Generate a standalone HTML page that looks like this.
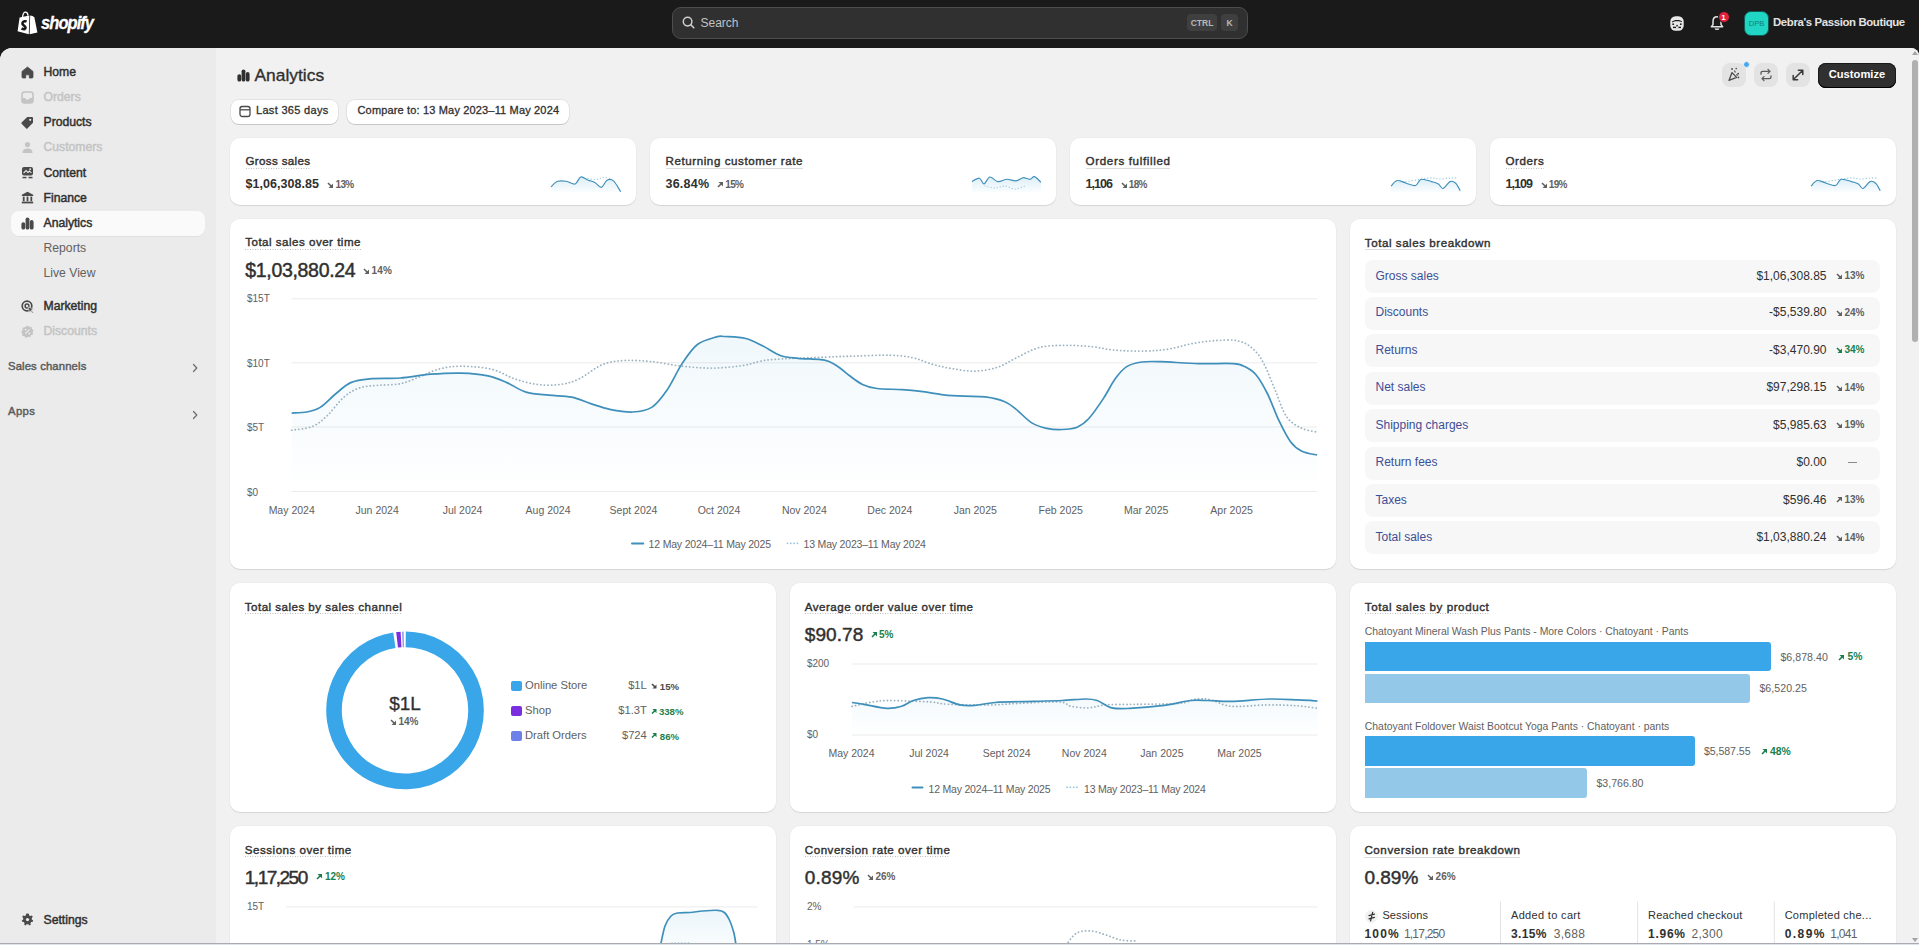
<!DOCTYPE html><html><head><meta charset="utf-8"><style>*{box-sizing:border-box;margin:0;padding:0}
html,body{width:1919px;height:945px;overflow:hidden;background:#1a1a1a;font-family:"Liberation Sans",sans-serif;color:#303030}
.abs{position:absolute}
#top{position:absolute;left:0;top:0;width:1919px;height:48px;background:#1a1a1a}
#frame{position:absolute;left:0;top:48px;width:1919px;height:897px;background:#f1f1f1;border-radius:12px 8px 0 0;overflow:hidden}
#side{position:absolute;left:0;top:48px;width:216px;height:897px;background:#ebebeb;border-radius:12px 0 0 0}
.nav{position:absolute;left:43px;font-size:12px;font-weight:bold;color:#303030;white-space:nowrap;letter-spacing:0}
.nav.dis{color:#b5b5b5}
.nav.sub{font-weight:normal;color:#4a4a4a}
.ico{position:absolute;left:21px;width:12px;height:12px}
.sect{position:absolute;left:8px;font-size:11.5px;font-weight:bold;color:#5c5c5c}
.chev{position:absolute;left:192px;width:8px;height:10px}
.card{position:absolute;background:#fff;border-radius:10px;box-shadow:0 1px 1px rgba(0,0,0,.10),0 0 0 1px rgba(0,0,0,.015)}
.ttl{position:absolute;font-size:12px;font-weight:bold;color:#303030;white-space:nowrap;border-bottom:1px dotted #c9c9c9;line-height:14px;padding-bottom:1px}
.t{position:absolute;white-space:nowrap}
.btn{position:absolute;background:#fff;border-radius:8px;box-shadow:0 1px 0 rgba(0,0,0,.12),0 0 0 1px rgba(0,0,0,.06);font-size:11px;font-weight:bold;color:#303030}
.down,.up{font-size:10px;font-weight:bold;color:#616161;white-space:nowrap}
.green{color:#1f8a55}
</style></head><body>
<div id="top"><svg class="abs" style="left:17px;top:11px" width="22" height="24" viewBox="0 0 22 24">
<path d="M0.6,20.2 L2.6,6.6 L12.4,4.4 L11.8,23.2 Z" fill="#fff"/>
<path d="M13.2,4.4 L15.6,5 L17.4,6.4 L20.4,21.6 L12.6,23.2 Z" fill="#fff"/>
<path d="M5.6,6.2 C5.8,3 7,1.2 8.6,1.2 C10,1.2 10.8,2.6 11,4.6" stroke="#fff" stroke-width="1.3" fill="none"/>
<path d="M9.6,10.6 C9,10.2 8.2,10.1 7.4,10.3 C5.8,10.7 5.2,12.1 5.6,13.2 C6,14.4 8.4,15 8.5,16.6 C8.6,17.8 7.2,18.6 5.4,17.9 L4.6,17.4" stroke="#1a1a1a" stroke-width="2.6" fill="none"/>
</svg><div class="t" style="left:40.8px;top:12.3px;font-size:19px;line-height:21px;font-weight:bold;font-style:italic;color:#fff;letter-spacing:-1.1px;transform:scaleX(0.87);transform-origin:0 0;-webkit-text-stroke:0.3px #fff">shopify</div><div class="abs" style="left:672px;top:7px;width:576px;height:32px;background:#303030;border:1px solid #4d4d4d;border-radius:9px"></div><svg class="abs" style="left:682px;top:16px" width="13" height="13" viewBox="0 0 13 13"><circle cx="5.6" cy="5.6" r="4.3" stroke="#cfcfcf" stroke-width="1.5" fill="none"/><path d="M8.8,8.8 L11.8,11.8" stroke="#cfcfcf" stroke-width="1.6" stroke-linecap="round"/></svg><div class="t" style="left:700.50px;top:17.14px;font-size:12px;line-height:12px;font-weight:normal;color:#c2c2c2;">Search</div><div class="abs" style="left:1187px;top:14px;width:30px;height:17px;background:#3f3f3f;border-radius:4px"></div><div class="t" style="left:1202.00px;top:18.80px;font-size:8.5px;line-height:8.5px;font-weight:bold;color:#b8b8b8;transform:translateX(-50%);">CTRL</div><div class="abs" style="left:1221px;top:14px;width:17px;height:17px;background:#3f3f3f;border-radius:4px"></div><div class="t" style="left:1229.50px;top:18.80px;font-size:8.5px;line-height:8.5px;font-weight:bold;color:#b8b8b8;transform:translateX(-50%);">K</div><svg class="abs" style="left:1670px;top:15.5px" width="14" height="15" viewBox="0 0 14 15">
<rect x="0.3" y="0.3" width="13.4" height="14.4" rx="5.2" fill="#e8e8e8"/>
<path d="M2,5.6 C4,3.6 9.5,3.4 12,5.4 L12,6.2 C9.5,5 5,4.8 2,6.4 Z" fill="#1a1a1a"/>
<circle cx="3.2" cy="8.2" r="0.9" fill="#1a1a1a"/><circle cx="10.8" cy="8.2" r="0.9" fill="#1a1a1a"/><circle cx="7" cy="9.6" r="0.8" fill="#1a1a1a"/>
<path d="M3,11.4 L11,11.4" stroke="#1a1a1a" stroke-width="1.4"/><rect x="6" y="10.8" width="2.4" height="1.2" fill="#e8e8e8"/>
</svg><svg class="abs" style="left:1710px;top:15px" width="16" height="16" viewBox="0 0 16 16">
<path d="M7,1.8 C4.2,1.8 3,4 3,6.4 L3,9.6 L1.4,11.8 L12.6,11.8 L11,9.6 L11,6.4 C11,4 9.8,1.8 7,1.8 Z" stroke="#e3e3e3" stroke-width="1.5" fill="none" stroke-linejoin="round"/>
<path d="M5.2,13.4 C5.6,14.6 8.4,14.6 8.8,13.4" stroke="#e3e3e3" stroke-width="1.5" fill="none"/></svg><div class="abs" style="left:1717.5px;top:11px;width:12px;height:12px;background:#e0233a;border-radius:50%;border:1.5px solid #1a1a1a"></div><div class="t" style="left:1723.50px;top:14.23px;font-size:8px;line-height:8px;font-weight:bold;color:#fff;transform:translateX(-50%);">1</div><div class="abs" style="left:1744px;top:11px;width:25px;height:25px;background:#20d5c4;border-radius:7px;border:1px solid #0e5c56"></div><div class="t" style="left:1756.50px;top:20.15px;font-size:7.5px;line-height:7.5px;font-weight:normal;color:#0d8078;transform:translateX(-50%);">DPB</div><div class="t" style="left:1773.00px;top:16.65px;font-size:11.4px;line-height:11.4px;font-weight:bold;color:#e3e3e3;letter-spacing:-0.370px;margin-right:0.370px;">Debra's Passion Boutique</div></div><div id="frame"></div><div id="side"></div><div class="abs" style="left:11px;top:210.5px;width:194px;height:25.5px;background:#fafafa;border-radius:8px;box-shadow:0 1px 0 rgba(0,0,0,.04)"></div><div class="t" style="left:43.50px;top:65.87px;font-size:12.2px;line-height:12.2px;font-weight:normal;color:#303030;-webkit-text-stroke:0.45px #303030">Home</div><div class="t" style="left:43.50px;top:90.87px;font-size:12.2px;line-height:12.2px;font-weight:normal;color:#c4c4c4;-webkit-text-stroke:0.45px #c4c4c4">Orders</div><div class="t" style="left:43.50px;top:115.87px;font-size:12.2px;line-height:12.2px;font-weight:normal;color:#303030;-webkit-text-stroke:0.45px #303030">Products</div><div class="t" style="left:43.50px;top:140.87px;font-size:12.2px;line-height:12.2px;font-weight:normal;color:#c4c4c4;-webkit-text-stroke:0.45px #c4c4c4">Customers</div><div class="t" style="left:43.50px;top:166.67px;font-size:12.2px;line-height:12.2px;font-weight:normal;color:#303030;-webkit-text-stroke:0.45px #303030">Content</div><div class="t" style="left:43.50px;top:191.67px;font-size:12.2px;line-height:12.2px;font-weight:normal;color:#303030;-webkit-text-stroke:0.45px #303030">Finance</div><div class="t" style="left:43.50px;top:216.67px;font-size:12.2px;line-height:12.2px;font-weight:normal;color:#303030;-webkit-text-stroke:0.45px #303030">Analytics</div><div class="t" style="left:43.50px;top:241.87px;font-size:12.2px;line-height:12.2px;font-weight:normal;color:#616161;">Reports</div><div class="t" style="left:43.50px;top:266.67px;font-size:12.2px;line-height:12.2px;font-weight:normal;color:#616161;">Live View</div><div class="t" style="left:43.50px;top:300.17px;font-size:12.2px;line-height:12.2px;font-weight:normal;color:#303030;-webkit-text-stroke:0.45px #303030">Marketing</div><div class="t" style="left:43.50px;top:324.67px;font-size:12.2px;line-height:12.2px;font-weight:normal;color:#c4c4c4;-webkit-text-stroke:0.45px #c4c4c4">Discounts</div><svg class="abs" style="left:20.5px;top:65.5px" width="13" height="13" viewBox="0 0 13 13"><path d="M6.5,1 L12,5.4 L12,11 Q12,12 11,12 L8.3,12 L8.3,8.8 L4.7,8.8 L4.7,12 L2,12 Q1,12 1,11 L1,5.4 Z" fill="#4a4a4a" stroke="#4a4a4a" stroke-linejoin="round" stroke-width="0.8"/></svg><svg class="abs" style="left:20.5px;top:90.5px" width="13" height="13" viewBox="0 0 13 13"><rect x="1" y="1" width="11" height="11" rx="2.5" fill="none" stroke="#c4c4c4" stroke-width="1.6"/><path d="M1,7 L4.2,7 L5,8.6 L8,8.6 L8.8,7 L12,7 L12,10 Q12,12 10,12 L3,12 Q1,12 1,10 Z" fill="#c4c4c4"/></svg><svg class="abs" style="left:20.5px;top:115.5px" width="13" height="13" viewBox="0 0 13 13"><path d="M6.2,1 L11,1 Q12,1 12,2 L12,6.8 L6.4,12.4 Q5.8,13 5.2,12.4 L0.6,7.8 Q0,7.2 0.6,6.6 Z" fill="#4a4a4a"/><circle cx="9.2" cy="3.8" r="1.1" fill="#ebebeb"/></svg><svg class="abs" style="left:20.5px;top:140.5px" width="13" height="13" viewBox="0 0 13 13"><circle cx="6.5" cy="3.6" r="2.6" fill="#c4c4c4"/><path d="M1.5,12 Q1.5,7.6 6.5,7.6 Q11.5,7.6 11.5,12 Z" fill="#c4c4c4"/></svg><svg class="abs" style="left:20.5px;top:166px" width="13" height="13" viewBox="0 0 13 13"><rect x="1" y="1" width="11" height="8.6" rx="2" fill="#4a4a4a"/><path d="M2.6,7.2 L5,4.6 L7,6.4 L8.6,5 L10.4,7" stroke="#ebebeb" stroke-width="1.1" fill="none"/><circle cx="9.2" cy="3.2" r="0.9" fill="#ebebeb"/><rect x="1.5" y="10.8" width="4" height="1.5" fill="#4a4a4a"/><rect x="7.5" y="10.8" width="4" height="1.5" fill="#4a4a4a"/></svg><svg class="abs" style="left:20.5px;top:191px" width="13" height="13" viewBox="0 0 13 13"><path d="M6.5,0.8 L12.2,3.8 L12.2,5 L0.8,5 L0.8,3.8 Z" fill="#4a4a4a"/><rect x="1.8" y="5.6" width="1.8" height="4.6" fill="#4a4a4a"/><rect x="5.6" y="5.6" width="1.8" height="4.6" fill="#4a4a4a"/><rect x="9.4" y="5.6" width="1.8" height="4.6" fill="#4a4a4a"/><rect x="0.8" y="10.6" width="11.4" height="1.8" fill="#4a4a4a"/></svg><svg class="abs" style="left:20.5px;top:216.5px" width="13" height="13" viewBox="0 0 13 13"><rect x="0.4" y="5.2" width="3.8" height="7.4" rx="1.9" fill="#4a4a4a"/><rect x="4.6" y="0.4" width="3.8" height="12.2" rx="1.9" fill="#4a4a4a"/><rect x="8.8" y="3" width="3.8" height="9.6" rx="1.9" fill="#4a4a4a"/></svg><svg class="abs" style="left:20.5px;top:300px" width="13" height="13" viewBox="0 0 13 13"><circle cx="6" cy="6" r="4.8" stroke="#4a4a4a" stroke-width="1.7" fill="none"/><circle cx="6" cy="6" r="1.9" stroke="#4a4a4a" stroke-width="1.5" fill="none"/><path d="M6.8,6.8 L12.6,9 L10.2,10 L12.4,12.4 L11.6,13 L9.6,10.8 L8.8,12.8 Z" fill="#4a4a4a" stroke="#ebebeb" stroke-width="0.6"/></svg><svg class="abs" style="left:20.5px;top:324.8px" width="13" height="13" viewBox="0 0 13 13"><path d="M6.5,0.5 L8.2,1.9 L10.4,1.7 L10.9,3.9 L12.6,5.3 L11.6,7.2 L12.1,9.4 L10,10.2 L9.1,12.3 L6.9,11.8 L5,12.9 L3.5,11.2 L1.3,11 L1.2,8.8 L0.2,6.8 L1.6,5 L1.7,2.8 L3.9,2.3 Z" fill="#c4c4c4"/><path d="M4.4,8.6 L8.6,4.4" stroke="#ebebeb" stroke-width="1.2"/><circle cx="4.6" cy="4.6" r="0.9" fill="#ebebeb"/><circle cx="8.4" cy="8.4" r="0.9" fill="#ebebeb"/></svg><div class="t" style="left:8.00px;top:360.63px;font-size:11.3px;line-height:11.3px;font-weight:normal;color:#5c5c5c;letter-spacing:0.128px;margin-right:-0.128px;-webkit-text-stroke:0.45px #5c5c5c">Sales channels</div><div class="t" style="left:8.00px;top:406.43px;font-size:11.3px;line-height:11.3px;font-weight:normal;color:#5c5c5c;letter-spacing:0.348px;margin-right:-0.348px;-webkit-text-stroke:0.45px #5c5c5c">Apps</div><svg class="abs" style="left:191px;top:362.5px" width="8" height="10" viewBox="0 0 8 10"><path d="M2.5,1.5 L5.8,5 L2.5,8.5" stroke="#6b6b6b" stroke-width="1.2" fill="none" stroke-linecap="round" stroke-linejoin="round"/></svg><svg class="abs" style="left:191px;top:409.5px" width="8" height="10" viewBox="0 0 8 10"><path d="M2.5,1.5 L5.8,5 L2.5,8.5" stroke="#6b6b6b" stroke-width="1.2" fill="none" stroke-linecap="round" stroke-linejoin="round"/></svg><div class="t" style="left:43.50px;top:913.67px;font-size:12.2px;line-height:12.2px;font-weight:normal;color:#303030;-webkit-text-stroke:0.45px #303030">Settings</div><svg class="abs" style="left:20.5px;top:912.5px" width="13" height="13" viewBox="0 0 13 13"><path d="M6.5,0.6 L7.9,0.8 L8.2,2.4 L9.4,3.1 L10.9,2.5 L11.8,3.7 L10.8,5 L10.8,6.5 L12.2,7.4 L11.8,8.8 L10.2,9.1 L9.4,10.2 L9.8,11.8 L8.5,12.4 L7.4,11.2 L5.6,11.2 L4.5,12.4 L3.2,11.8 L3.6,10.2 L2.8,9.1 L1.2,8.8 L0.8,7.4 L2.2,6.5 L2.2,5 L1.2,3.7 L2.1,2.5 L3.6,3.1 L4.8,2.4 L5.1,0.8 Z" fill="#4a4a4a"/><circle cx="6.5" cy="6.6" r="1.6" fill="#ebebeb"/></svg><svg class="abs" style="left:236.5px;top:68.5px" width="13" height="13" viewBox="0 0 13 13"><rect x="0.4" y="5.2" width="3.8" height="7.4" rx="1.9" fill="#303030"/><rect x="4.6" y="0.4" width="3.8" height="12.2" rx="1.9" fill="#303030"/><rect x="8.8" y="3" width="3.8" height="9.6" rx="1.9" fill="#303030"/></svg><div class="t" style="left:254.50px;top:66.57px;font-size:17.4px;line-height:17.4px;font-weight:normal;color:#303030;-webkit-text-stroke:0.35px #303030">Analytics</div><div class="btn" style="left:231px;top:100px;width:107px;height:23.5px"></div><svg class="abs" style="left:239px;top:104.5px" width="12" height="13" viewBox="0 0 12 13"><rect x="1" y="1.5" width="10" height="10" rx="2.2" stroke="#4a4a4a" stroke-width="1.3" fill="none"/><path d="M1,4.8 L11,4.8" stroke="#4a4a4a" stroke-width="1.3"/></svg><div class="t" style="left:256.00px;top:105.49px;font-size:11px;line-height:11px;font-weight:normal;color:#303030;letter-spacing:0.309px;margin-right:-0.309px;-webkit-text-stroke:0.3px #303030">Last 365 days</div><div class="btn" style="left:347px;top:100px;width:222px;height:23.5px"></div><div class="t" style="left:357.50px;top:105.49px;font-size:11px;line-height:11px;font-weight:normal;color:#303030;letter-spacing:0.160px;margin-right:-0.160px;-webkit-text-stroke:0.3px #303030">Compare to: 13 May 2023–11 May 2024</div><div class="abs" style="left:1721.5px;top:63px;width:24px;height:24px;background:#e3e3e3;border-radius:8px"></div><div class="abs" style="left:1754px;top:63px;width:24px;height:24px;background:#e3e3e3;border-radius:8px"></div><div class="abs" style="left:1786px;top:63px;width:24px;height:24px;background:#e3e3e3;border-radius:8px"></div><div class="abs" style="left:1742.5px;top:60.5px;width:7px;height:7px;background:#4aa8f0;border-radius:50%;border:1px solid #f1f1f1"></div><svg class="abs" style="left:1726px;top:67px" width="16" height="16" viewBox="0 0 16 16">
<path d="M3,13.4 L6,5.6 L10.6,10.4 Z" stroke="#4a4a4a" stroke-width="1.3" fill="none" stroke-linejoin="round"/>
<circle cx="6" cy="2" r="0.9" fill="#4a4a4a"/><circle cx="10.2" cy="1.6" r="0.8" fill="#4a4a4a"/><circle cx="12.2" cy="6.6" r="0.9" fill="#4a4a4a"/><circle cx="12.4" cy="10.4" r="0.9" fill="#4a4a4a"/>
<path d="M8.4,3.6 L9.4,5.4 M10.2,7.6 L12.2,8.2" stroke="#4a4a4a" stroke-width="1.1"/></svg><svg class="abs" style="left:1759px;top:68px" width="14" height="14" viewBox="0 0 14 14">
<path d="M2,6.2 L2,5 Q2,3.4 3.6,3.4 L11,3.4 M9,1.4 L11,3.4 L9,5.4" stroke="#5c5c5c" stroke-width="1.3" fill="none" stroke-linecap="round" stroke-linejoin="round"/>
<path d="M12,7.8 L12,9 Q12,10.6 10.4,10.6 L3,10.6 M5,8.6 L3,10.6 L5,12.6" stroke="#5c5c5c" stroke-width="1.3" fill="none" stroke-linecap="round" stroke-linejoin="round"/></svg><svg class="abs" style="left:1791px;top:68px" width="14" height="14" viewBox="0 0 14 14">
<path d="M2.2,11.8 L11.8,2.2 M7.4,2.2 L11.8,2.2 L11.8,6.6 M2.2,7.4 L2.2,11.8 L6.6,11.8" stroke="#3a3a3a" stroke-width="1.5" fill="none" stroke-linecap="round" stroke-linejoin="round"/></svg><div class="abs" style="left:1818px;top:63px;width:78px;height:24.5px;background:#303030;border-radius:8px;box-shadow:inset 0 -1px 0 #000,inset 0 0 0 1px #1a1a1a"></div><div class="t" style="left:1857.00px;top:68.52px;font-size:11.2px;line-height:11.2px;font-weight:bold;color:#fff;transform:translateX(-50%);">Customize</div><div class="card" style="left:230px;top:138px;width:406px;height:67px"></div><div class="t" style="left:245.50px;top:155.43px;font-size:11.6px;line-height:11.6px;font-weight:normal;color:#303030;letter-spacing:0.336px;margin-right:-0.336px;-webkit-text-stroke:0.4px #303030">Gross sales</div><div class="abs" style="left:245.5px;top:167.5px;width:64.6px;height:1px;background-image:linear-gradient(90deg,#b5b5b5 1px,transparent 1px);background-size:2.5px 1px"></div><div class="card" style="left:650px;top:138px;width:406px;height:67px"></div><div class="t" style="left:665.50px;top:155.43px;font-size:11.6px;line-height:11.6px;font-weight:normal;color:#303030;letter-spacing:0.571px;margin-right:-0.571px;-webkit-text-stroke:0.4px #303030">Returning customer rate</div><div class="abs" style="left:665.5px;top:167.5px;width:137px;height:1px;background:#dcdcdc"></div><div class="card" style="left:1070px;top:138px;width:406px;height:67px"></div><div class="t" style="left:1085.50px;top:155.43px;font-size:11.6px;line-height:11.6px;font-weight:normal;color:#303030;letter-spacing:0.654px;margin-right:-0.654px;-webkit-text-stroke:0.4px #303030">Orders fulfilled</div><div class="abs" style="left:1085.5px;top:167.5px;width:84.6px;height:1px;background:#dcdcdc"></div><div class="card" style="left:1490px;top:138px;width:406px;height:67px"></div><div class="t" style="left:1505.50px;top:155.43px;font-size:11.6px;line-height:11.6px;font-weight:normal;color:#303030;letter-spacing:0.570px;margin-right:-0.570px;-webkit-text-stroke:0.4px #303030">Orders</div><div class="abs" style="left:1505.5px;top:167.5px;width:38.3px;height:1px;background-image:linear-gradient(90deg,#b5b5b5 1px,transparent 1px);background-size:2.5px 1px"></div><div class="t" style="left:245.50px;top:177.92px;font-size:12.5px;line-height:12.5px;font-weight:bold;color:#303030;letter-spacing:0.038px;margin-right:-0.038px;">$1,06,308.85</div><svg class="abs" style="left:327.3px;top:181.8px" width="6" height="6" viewBox="0 0 6 6"><path d="M1,1 L4.8,4.8" stroke="#616161" stroke-width="1.6" fill="none"/><path d="M6,1.5 L6,6 L1.5,6 Z" fill="#616161"/></svg><div class="t" style="left:335.60px;top:179.84px;font-size:10px;line-height:10px;font-weight:bold;color:#616161;letter-spacing:-0.707px;margin-right:0.707px;">13%</div><div class="t" style="left:665.50px;top:177.92px;font-size:12.5px;line-height:12.5px;font-weight:bold;color:#303030;letter-spacing:0.221px;margin-right:-0.221px;">36.84%</div><svg class="abs" style="left:717px;top:181.8px" width="6" height="6" viewBox="0 0 6 6"><path d="M1,5 L4.8,1.2" stroke="#616161" stroke-width="1.6" fill="none"/><path d="M1.5,0 L6,0 L6,4.5 Z" fill="#616161"/></svg><div class="t" style="left:725.30px;top:179.84px;font-size:10px;line-height:10px;font-weight:bold;color:#616161;letter-spacing:-0.707px;margin-right:0.707px;">15%</div><div class="t" style="left:1085.50px;top:177.92px;font-size:12.5px;line-height:12.5px;font-weight:bold;color:#303030;letter-spacing:-0.945px;margin-right:0.945px;">1,106</div><svg class="abs" style="left:1120.5px;top:181.8px" width="6" height="6" viewBox="0 0 6 6"><path d="M1,1 L4.8,4.8" stroke="#616161" stroke-width="1.6" fill="none"/><path d="M6,1.5 L6,6 L1.5,6 Z" fill="#616161"/></svg><div class="t" style="left:1128.80px;top:179.84px;font-size:10px;line-height:10px;font-weight:bold;color:#616161;letter-spacing:-0.707px;margin-right:0.707px;">18%</div><div class="t" style="left:1505.50px;top:177.92px;font-size:12.5px;line-height:12.5px;font-weight:bold;color:#303030;letter-spacing:-0.945px;margin-right:0.945px;">1,109</div><svg class="abs" style="left:1540.5px;top:181.8px" width="6" height="6" viewBox="0 0 6 6"><path d="M1,1 L4.8,4.8" stroke="#616161" stroke-width="1.6" fill="none"/><path d="M6,1.5 L6,6 L1.5,6 Z" fill="#616161"/></svg><div class="t" style="left:1548.80px;top:179.84px;font-size:10px;line-height:10px;font-weight:bold;color:#616161;letter-spacing:-0.707px;margin-right:0.707px;">19%</div><div class="card" style="left:230px;top:219px;width:1106px;height:350px"></div><div class="card" style="left:1350px;top:219px;width:546px;height:350px"></div><div class="card" style="left:230px;top:583px;width:546px;height:229px"></div><div class="card" style="left:790px;top:583px;width:546px;height:229px"></div><div class="card" style="left:1350px;top:583px;width:546px;height:229px"></div><div class="card" style="left:230px;top:826px;width:546px;height:200px"></div><div class="card" style="left:790px;top:826px;width:546px;height:200px"></div><div class="card" style="left:1350px;top:826px;width:546px;height:200px"></div><div class="t" style="left:1364.80px;top:236.78px;font-size:11.6px;line-height:11.6px;font-weight:normal;color:#303030;letter-spacing:0.546px;margin-right:-0.546px;-webkit-text-stroke:0.4px #303030">Total sales breakdown</div><div class="abs" style="left:1364.8px;top:248.75px;width:125.7px;height:1px;background:#dcdcdc"></div><div class="abs" style="left:1365px;top:260px;width:515px;height:33px;background:#f7f7f7;border-radius:8px"></div><div class="t" style="left:1375.50px;top:269.64px;font-size:12px;line-height:12px;font-weight:normal;color:#3c4f96;">Gross sales</div><div class="t" style="right:92.50px;top:269.64px;font-size:12px;line-height:12px;font-weight:normal;color:#303030;">$1,06,308.85</div><svg class="abs" style="left:1836.4px;top:273.3px" width="6" height="6" viewBox="0 0 6 6"><path d="M1,1 L4.8,4.8" stroke="#616161" stroke-width="1.6" fill="none"/><path d="M6,1.5 L6,6 L1.5,6 Z" fill="#616161"/></svg><div class="t" style="left:1844.50px;top:271.34px;font-size:10px;line-height:10px;font-weight:bold;color:#616161;">13%</div><div class="abs" style="left:1365px;top:296.5px;width:515px;height:33px;background:#f7f7f7;border-radius:8px"></div><div class="t" style="left:1375.50px;top:306.14px;font-size:12px;line-height:12px;font-weight:normal;color:#3c4f96;">Discounts</div><div class="t" style="right:92.50px;top:306.14px;font-size:12px;line-height:12px;font-weight:normal;color:#303030;">-$5,539.80</div><svg class="abs" style="left:1836.4px;top:309.8px" width="6" height="6" viewBox="0 0 6 6"><path d="M1,1 L4.8,4.8" stroke="#616161" stroke-width="1.6" fill="none"/><path d="M6,1.5 L6,6 L1.5,6 Z" fill="#616161"/></svg><div class="t" style="left:1844.50px;top:307.84px;font-size:10px;line-height:10px;font-weight:bold;color:#616161;">24%</div><div class="abs" style="left:1365px;top:334px;width:515px;height:33px;background:#f7f7f7;border-radius:8px"></div><div class="t" style="left:1375.50px;top:343.64px;font-size:12px;line-height:12px;font-weight:normal;color:#3c4f96;">Returns</div><div class="t" style="right:92.50px;top:343.64px;font-size:12px;line-height:12px;font-weight:normal;color:#303030;">-$3,470.90</div><svg class="abs" style="left:1836.4px;top:347.3px" width="6" height="6" viewBox="0 0 6 6"><path d="M1,1 L4.8,4.8" stroke="#1b7f4d" stroke-width="1.6" fill="none"/><path d="M6,1.5 L6,6 L1.5,6 Z" fill="#1b7f4d"/></svg><div class="t" style="left:1844.50px;top:345.34px;font-size:10px;line-height:10px;font-weight:bold;color:#1b7f4d;">34%</div><div class="abs" style="left:1365px;top:371.5px;width:515px;height:33px;background:#f7f7f7;border-radius:8px"></div><div class="t" style="left:1375.50px;top:381.14px;font-size:12px;line-height:12px;font-weight:normal;color:#3c4f96;">Net sales</div><div class="t" style="right:92.50px;top:381.14px;font-size:12px;line-height:12px;font-weight:normal;color:#303030;">$97,298.15</div><svg class="abs" style="left:1836.4px;top:384.8px" width="6" height="6" viewBox="0 0 6 6"><path d="M1,1 L4.8,4.8" stroke="#616161" stroke-width="1.6" fill="none"/><path d="M6,1.5 L6,6 L1.5,6 Z" fill="#616161"/></svg><div class="t" style="left:1844.50px;top:382.84px;font-size:10px;line-height:10px;font-weight:bold;color:#616161;">14%</div><div class="abs" style="left:1365px;top:409px;width:515px;height:33px;background:#f7f7f7;border-radius:8px"></div><div class="t" style="left:1375.50px;top:418.64px;font-size:12px;line-height:12px;font-weight:normal;color:#3c4f96;">Shipping charges</div><div class="t" style="right:92.50px;top:418.64px;font-size:12px;line-height:12px;font-weight:normal;color:#303030;">$5,985.63</div><svg class="abs" style="left:1836.4px;top:422.3px" width="6" height="6" viewBox="0 0 6 6"><path d="M1,1 L4.8,4.8" stroke="#616161" stroke-width="1.6" fill="none"/><path d="M6,1.5 L6,6 L1.5,6 Z" fill="#616161"/></svg><div class="t" style="left:1844.50px;top:420.34px;font-size:10px;line-height:10px;font-weight:bold;color:#616161;">19%</div><div class="abs" style="left:1365px;top:446.5px;width:515px;height:33px;background:#f7f7f7;border-radius:8px"></div><div class="t" style="left:1375.50px;top:456.14px;font-size:12px;line-height:12px;font-weight:normal;color:#3c4f96;">Return fees</div><div class="t" style="right:92.50px;top:456.14px;font-size:12px;line-height:12px;font-weight:normal;color:#303030;">$0.00</div><div class="abs" style="left:1848px;top:461.8px;width:9px;height:1.2px;background:#8a8a8a"></div><div class="abs" style="left:1365px;top:484px;width:515px;height:33px;background:#f7f7f7;border-radius:8px"></div><div class="t" style="left:1375.50px;top:493.64px;font-size:12px;line-height:12px;font-weight:normal;color:#3c4f96;">Taxes</div><div class="t" style="right:92.50px;top:493.64px;font-size:12px;line-height:12px;font-weight:normal;color:#303030;">$596.46</div><svg class="abs" style="left:1836.4px;top:497.3px" width="6" height="6" viewBox="0 0 6 6"><path d="M1,5 L4.8,1.2" stroke="#616161" stroke-width="1.6" fill="none"/><path d="M1.5,0 L6,0 L6,4.5 Z" fill="#616161"/></svg><div class="t" style="left:1844.50px;top:495.34px;font-size:10px;line-height:10px;font-weight:bold;color:#616161;">13%</div><div class="abs" style="left:1365px;top:521.3px;width:515px;height:33px;background:#f7f7f7;border-radius:8px"></div><div class="t" style="left:1375.50px;top:530.94px;font-size:12px;line-height:12px;font-weight:normal;color:#3c4f96;">Total sales</div><div class="t" style="right:92.50px;top:530.94px;font-size:12px;line-height:12px;font-weight:normal;color:#303030;">$1,03,880.24</div><svg class="abs" style="left:1836.4px;top:534.5999999999999px" width="6" height="6" viewBox="0 0 6 6"><path d="M1,1 L4.8,4.8" stroke="#616161" stroke-width="1.6" fill="none"/><path d="M6,1.5 L6,6 L1.5,6 Z" fill="#616161"/></svg><div class="t" style="left:1844.50px;top:532.63px;font-size:10px;line-height:10px;font-weight:bold;color:#616161;">14%</div><div class="t" style="left:245.20px;top:236.18px;font-size:11.6px;line-height:11.6px;font-weight:normal;color:#303030;letter-spacing:0.483px;margin-right:-0.483px;-webkit-text-stroke:0.4px #303030">Total sales over time</div><div class="abs" style="left:245.2px;top:248.75px;width:115.4px;height:1px;background-image:linear-gradient(90deg,#b5b5b5 1px,transparent 1px);background-size:2.5px 1px"></div><div class="t" style="left:245.20px;top:260.59px;font-size:19.5px;line-height:19.5px;font-weight:normal;color:#303030;letter-spacing:-0.305px;margin-right:0.305px;-webkit-text-stroke:0.45px #303030">$1,03,880.24</div><svg class="abs" style="left:363.3px;top:267.5px" width="6" height="6" viewBox="0 0 6 6"><path d="M1,1 L4.8,4.8" stroke="#616161" stroke-width="1.6" fill="none"/><path d="M6,1.5 L6,6 L1.5,6 Z" fill="#616161"/></svg><div class="t" style="left:371.60px;top:265.54px;font-size:10px;line-height:10px;font-weight:bold;color:#616161;letter-spacing:0.093px;margin-right:-0.093px;">14%</div><div class="t" style="left:247.00px;top:294.44px;font-size:10px;line-height:10px;font-weight:normal;color:#616161;">$15T</div><div class="t" style="left:247.00px;top:358.54px;font-size:10px;line-height:10px;font-weight:normal;color:#616161;">$10T</div><div class="t" style="left:247.00px;top:423.14px;font-size:10px;line-height:10px;font-weight:normal;color:#616161;">$5T</div><div class="t" style="left:247.00px;top:487.54px;font-size:10px;line-height:10px;font-weight:normal;color:#616161;">$0</div><div class="t" style="left:291.70px;top:505.11px;font-size:10.5px;line-height:10.5px;font-weight:normal;color:#616161;transform:translateX(-50%);">May 2024</div><div class="t" style="left:377.15px;top:505.11px;font-size:10.5px;line-height:10.5px;font-weight:normal;color:#616161;transform:translateX(-50%);">Jun 2024</div><div class="t" style="left:462.60px;top:505.11px;font-size:10.5px;line-height:10.5px;font-weight:normal;color:#616161;transform:translateX(-50%);">Jul 2024</div><div class="t" style="left:548.05px;top:505.11px;font-size:10.5px;line-height:10.5px;font-weight:normal;color:#616161;transform:translateX(-50%);">Aug 2024</div><div class="t" style="left:633.50px;top:505.11px;font-size:10.5px;line-height:10.5px;font-weight:normal;color:#616161;transform:translateX(-50%);">Sept 2024</div><div class="t" style="left:718.95px;top:505.11px;font-size:10.5px;line-height:10.5px;font-weight:normal;color:#616161;transform:translateX(-50%);">Oct 2024</div><div class="t" style="left:804.40px;top:505.11px;font-size:10.5px;line-height:10.5px;font-weight:normal;color:#616161;transform:translateX(-50%);">Nov 2024</div><div class="t" style="left:889.85px;top:505.11px;font-size:10.5px;line-height:10.5px;font-weight:normal;color:#616161;transform:translateX(-50%);">Dec 2024</div><div class="t" style="left:975.30px;top:505.11px;font-size:10.5px;line-height:10.5px;font-weight:normal;color:#616161;transform:translateX(-50%);">Jan 2025</div><div class="t" style="left:1060.75px;top:505.11px;font-size:10.5px;line-height:10.5px;font-weight:normal;color:#616161;transform:translateX(-50%);">Feb 2025</div><div class="t" style="left:1146.20px;top:505.11px;font-size:10.5px;line-height:10.5px;font-weight:normal;color:#616161;transform:translateX(-50%);">Mar 2025</div><div class="t" style="left:1231.65px;top:505.11px;font-size:10.5px;line-height:10.5px;font-weight:normal;color:#616161;transform:translateX(-50%);">Apr 2025</div><svg class="abs" style="left:0;top:0" width="1919" height="945" viewBox="0 0 1919 945"><defs><linearGradient id="g1" x1="0" y1="0" x2="0" y2="1"><stop offset="0" stop-color="#3aa0d0" stop-opacity="0.075"/><stop offset="1" stop-color="#3aa0d0" stop-opacity="0"/></linearGradient></defs><path d="M291.7,298.8 L1317,298.8" stroke="#ebebeb" stroke-width="1"/><path d="M291.7,362.8 L1317,362.8" stroke="#ebebeb" stroke-width="1"/><path d="M291.7,427 L1317,427" stroke="#ebebeb" stroke-width="1"/><path d="M291.7,491.5 L1317,491.5" stroke="#ebebeb" stroke-width="1"/><path d="M291.7,413.1 C294.2,412.9 302.1,412.9 306.9,412.0 C311.6,411.1 315.4,410.4 320.2,407.4 C325.0,404.4 330.4,398.1 335.5,394.0 C340.6,389.9 345.0,385.1 350.7,382.6 C356.4,380.1 361.6,379.6 369.8,378.8 C378.1,378.0 390.1,378.8 400.2,378.0 C410.3,377.2 420.5,375.0 430.7,374.2 C440.9,373.4 451.7,372.8 461.2,373.1 C470.7,373.4 480.3,374.2 487.9,375.8 C495.5,377.4 500.5,379.9 506.9,382.6 C513.2,385.3 519.0,390.0 526.0,392.1 C533.0,394.2 541.2,394.4 548.8,395.2 C556.4,396.0 564.7,395.7 571.7,397.1 C578.7,398.5 584.4,401.6 590.7,403.6 C597.1,405.6 602.8,407.9 609.8,409.3 C616.8,410.7 625.6,412.3 632.6,412.0 C639.6,411.7 646.0,411.0 651.7,407.4 C657.4,403.8 661.8,397.5 666.9,390.2 C672.0,382.9 677.0,371.2 682.1,363.6 C687.2,356.0 691.7,348.9 697.4,344.5 C703.1,340.1 711.8,338.2 716.4,336.9 C721.0,335.6 720.1,336.2 725.0,336.5 C729.9,336.8 739.5,336.9 745.8,338.5 C752.0,340.1 756.6,342.9 762.5,345.8 C768.4,348.7 775.1,353.7 781.0,355.8 C786.9,357.9 791.7,357.7 798.0,358.3 C804.3,358.9 813.6,358.9 818.8,359.4 C824.0,359.9 825.5,360.1 829.0,361.5 C832.5,362.9 836.1,365.3 839.6,367.7 C843.1,370.1 846.2,373.2 850.0,376.0 C853.8,378.8 858.0,382.3 862.5,384.4 C867.0,386.5 870.4,387.6 877.0,388.5 C883.6,389.4 894.3,389.1 902.0,389.6 C909.7,390.1 916.0,390.8 923.0,391.7 C930.0,392.6 936.9,394.1 943.8,394.8 C950.7,395.6 957.7,395.9 964.6,396.2 C971.5,396.5 978.7,396.0 985.4,396.9 C992.1,397.8 999.7,399.6 1004.8,401.7 C1009.9,403.8 1011.8,405.8 1016.2,409.3 C1020.6,412.8 1026.3,419.4 1031.4,422.6 C1036.5,425.8 1041.6,427.2 1046.7,428.3 C1051.8,429.4 1056.8,429.7 1061.9,429.5 C1067.0,429.3 1072.6,429.0 1077.1,427.2 C1081.5,425.4 1084.1,423.7 1088.6,418.8 C1093.0,413.9 1099.4,404.6 1103.8,397.9 C1108.2,391.2 1111.4,384.0 1115.2,378.8 C1119.0,373.6 1122.2,369.4 1126.7,366.6 C1131.2,363.8 1136.2,362.8 1141.9,362.0 C1147.6,361.2 1151.5,361.4 1161.0,361.7 C1170.5,362.0 1187.0,363.3 1199.0,363.6 C1211.0,363.9 1225.7,363.1 1233.3,363.6 C1240.9,364.1 1241.0,364.7 1244.8,366.6 C1248.6,368.5 1252.4,370.4 1256.2,375.0 C1260.0,379.6 1263.8,386.4 1267.6,394.0 C1271.4,401.6 1275.2,412.8 1279.0,420.7 C1282.8,428.6 1286.7,436.6 1290.5,441.7 C1294.3,446.8 1297.5,449.0 1301.9,451.2 C1306.3,453.4 1314.6,454.4 1317.1,455.0 L1317,491.5 L291.7,491.5 Z" fill="url(#g1)"/><path d="M291.7,430.2 C295.2,429.6 306.6,428.9 312.6,426.4 C318.6,423.9 322.8,419.8 327.9,415.0 C333.0,410.2 338.0,402.3 343.1,397.9 C348.2,393.4 352.6,390.4 358.3,388.3 C364.0,386.2 370.4,386.1 377.4,385.3 C384.4,384.6 393.2,385.2 400.2,383.8 C407.2,382.4 412.9,379.3 419.3,376.9 C425.7,374.5 431.3,371.1 438.3,369.3 C445.3,367.5 452.3,366.2 461.2,366.2 C470.1,366.2 482.8,367.2 491.7,369.3 C500.6,371.4 506.9,376.3 514.5,378.8 C522.1,381.3 529.8,383.6 537.4,384.5 C545.0,385.4 553.2,385.4 560.2,384.5 C567.2,383.6 572.3,382.1 579.3,378.8 C586.3,375.5 594.5,367.8 602.1,364.7 C609.7,361.6 616.7,361.0 625.0,360.5 C633.3,360.0 642.2,360.8 651.7,361.7 C661.2,362.6 672.0,365.1 682.1,366.2 C692.2,367.3 702.4,368.2 712.6,368.1 C722.8,368.0 733.6,366.9 743.1,365.5 C752.6,364.1 756.0,361.2 769.8,359.8 C783.6,358.4 811.3,357.7 825.7,357.1 C840.1,356.5 845.4,356.3 856.2,356.0 C867.0,355.7 881.0,354.9 890.5,355.2 C900.0,355.5 906.3,356.4 913.3,357.9 C920.3,359.4 926.0,362.5 932.4,364.3 C938.8,366.1 944.4,367.4 951.4,368.5 C958.4,369.6 966.7,371.4 974.3,371.2 C981.9,371.0 990.1,369.6 997.1,367.4 C1004.1,365.2 1009.2,361.2 1016.2,357.9 C1023.2,354.6 1030.8,349.7 1039.0,347.6 C1047.2,345.5 1056.8,345.4 1065.7,345.3 C1074.6,345.2 1084.2,346.0 1092.4,346.8 C1100.7,347.6 1106.3,349.5 1115.2,350.2 C1124.1,350.9 1136.8,351.2 1145.7,351.0 C1154.6,350.8 1161.0,350.3 1168.6,349.1 C1176.2,347.9 1183.8,345.2 1191.4,343.8 C1199.0,342.4 1206.7,341.2 1214.3,340.7 C1221.9,340.2 1230.8,339.4 1237.1,340.7 C1243.4,342.0 1248.0,344.5 1252.4,348.3 C1256.9,352.1 1260.0,356.6 1263.8,363.6 C1267.6,370.6 1271.4,381.3 1275.2,390.2 C1279.0,399.1 1282.2,410.5 1286.7,416.9 C1291.2,423.2 1296.8,425.8 1301.9,428.3 C1307.0,430.8 1314.6,431.5 1317.1,432.1" stroke="#9db3c0" stroke-width="1.8" fill="none" stroke-dasharray="0.1 3.5" stroke-linecap="round"/><path d="M291.7,413.1 C294.2,412.9 302.1,412.9 306.9,412.0 C311.6,411.1 315.4,410.4 320.2,407.4 C325.0,404.4 330.4,398.1 335.5,394.0 C340.6,389.9 345.0,385.1 350.7,382.6 C356.4,380.1 361.6,379.6 369.8,378.8 C378.1,378.0 390.1,378.8 400.2,378.0 C410.3,377.2 420.5,375.0 430.7,374.2 C440.9,373.4 451.7,372.8 461.2,373.1 C470.7,373.4 480.3,374.2 487.9,375.8 C495.5,377.4 500.5,379.9 506.9,382.6 C513.2,385.3 519.0,390.0 526.0,392.1 C533.0,394.2 541.2,394.4 548.8,395.2 C556.4,396.0 564.7,395.7 571.7,397.1 C578.7,398.5 584.4,401.6 590.7,403.6 C597.1,405.6 602.8,407.9 609.8,409.3 C616.8,410.7 625.6,412.3 632.6,412.0 C639.6,411.7 646.0,411.0 651.7,407.4 C657.4,403.8 661.8,397.5 666.9,390.2 C672.0,382.9 677.0,371.2 682.1,363.6 C687.2,356.0 691.7,348.9 697.4,344.5 C703.1,340.1 711.8,338.2 716.4,336.9 C721.0,335.6 720.1,336.2 725.0,336.5 C729.9,336.8 739.5,336.9 745.8,338.5 C752.0,340.1 756.6,342.9 762.5,345.8 C768.4,348.7 775.1,353.7 781.0,355.8 C786.9,357.9 791.7,357.7 798.0,358.3 C804.3,358.9 813.6,358.9 818.8,359.4 C824.0,359.9 825.5,360.1 829.0,361.5 C832.5,362.9 836.1,365.3 839.6,367.7 C843.1,370.1 846.2,373.2 850.0,376.0 C853.8,378.8 858.0,382.3 862.5,384.4 C867.0,386.5 870.4,387.6 877.0,388.5 C883.6,389.4 894.3,389.1 902.0,389.6 C909.7,390.1 916.0,390.8 923.0,391.7 C930.0,392.6 936.9,394.1 943.8,394.8 C950.7,395.6 957.7,395.9 964.6,396.2 C971.5,396.5 978.7,396.0 985.4,396.9 C992.1,397.8 999.7,399.6 1004.8,401.7 C1009.9,403.8 1011.8,405.8 1016.2,409.3 C1020.6,412.8 1026.3,419.4 1031.4,422.6 C1036.5,425.8 1041.6,427.2 1046.7,428.3 C1051.8,429.4 1056.8,429.7 1061.9,429.5 C1067.0,429.3 1072.6,429.0 1077.1,427.2 C1081.5,425.4 1084.1,423.7 1088.6,418.8 C1093.0,413.9 1099.4,404.6 1103.8,397.9 C1108.2,391.2 1111.4,384.0 1115.2,378.8 C1119.0,373.6 1122.2,369.4 1126.7,366.6 C1131.2,363.8 1136.2,362.8 1141.9,362.0 C1147.6,361.2 1151.5,361.4 1161.0,361.7 C1170.5,362.0 1187.0,363.3 1199.0,363.6 C1211.0,363.9 1225.7,363.1 1233.3,363.6 C1240.9,364.1 1241.0,364.7 1244.8,366.6 C1248.6,368.5 1252.4,370.4 1256.2,375.0 C1260.0,379.6 1263.8,386.4 1267.6,394.0 C1271.4,401.6 1275.2,412.8 1279.0,420.7 C1282.8,428.6 1286.7,436.6 1290.5,441.7 C1294.3,446.8 1297.5,449.0 1301.9,451.2 C1306.3,453.4 1314.6,454.4 1317.1,455.0" stroke="#3f8fbb" stroke-width="1.7" fill="none"/><path d="M632,543.4 L643.3,543.4" stroke="#3f8fbb" stroke-width="2" stroke-linecap="round"/><path d="M787.5,543.4 L798.3,543.4" stroke="#8cc3dc" stroke-width="1.6" stroke-dasharray="0.1 3.2" stroke-linecap="round"/></svg><div class="t" style="left:648.60px;top:538.71px;font-size:10.5px;line-height:10.5px;font-weight:normal;color:#616161;letter-spacing:-0.185px;margin-right:0.185px;">12 May 2024–11 May 2025</div><div class="t" style="left:803.60px;top:538.71px;font-size:10.5px;line-height:10.5px;font-weight:normal;color:#616161;letter-spacing:-0.189px;margin-right:0.189px;">13 May 2023–11 May 2024</div><div class="t" style="left:244.80px;top:601.18px;font-size:11.6px;line-height:11.6px;font-weight:normal;color:#303030;letter-spacing:0.465px;margin-right:-0.465px;-webkit-text-stroke:0.4px #303030">Total sales by sales channel</div><div class="abs" style="left:244.8px;top:613.25px;width:157px;height:1px;background-image:linear-gradient(90deg,#b5b5b5 1px,transparent 1px);background-size:2.5px 1px"></div><svg class="abs" style="left:0;top:0" width="1919" height="945" viewBox="0 0 1919 945"><path d="M405.74,639.40 A71,71 0 1 1 394.38,640.20" stroke="#38a6e8" stroke-width="15.6" fill="none"/><path d="M397.09,639.84 A71,71 0 0 1 401.04,639.51" stroke="#7a2ee0" stroke-width="15.6" fill="none"/><path d="M402.52,639.44 A71,71 0 0 1 403.64,639.41" stroke="#6d7fe8" stroke-width="15.6" fill="none"/></svg><div class="t" style="left:405.00px;top:693.72px;font-size:19px;line-height:19px;font-weight:normal;color:#303030;transform:translateX(-50%);-webkit-text-stroke:0.3px #303030">$1L</div><svg class="abs" style="left:389.9px;top:718.8px" width="6" height="6" viewBox="0 0 6 6"><path d="M1,1 L4.8,4.8" stroke="#616161" stroke-width="1.6" fill="none"/><path d="M6,1.5 L6,6 L1.5,6 Z" fill="#616161"/></svg><div class="t" style="left:398.50px;top:716.83px;font-size:10px;line-height:10px;font-weight:bold;color:#616161;">14%</div><div class="abs" style="left:511px;top:680.6px;width:11px;height:10.5px;background:#38a6e8;border-radius:2px"></div><div class="t" style="left:525.00px;top:679.92px;font-size:11.2px;line-height:11.2px;font-weight:normal;color:#616161;">Online Store</div><div class="t" style="right:1272.20px;top:679.92px;font-size:11.2px;line-height:11.2px;font-weight:normal;color:#616161;">$1L</div><svg class="abs" style="left:651px;top:683.4px" width="5.5" height="5.5" viewBox="0 0 5.5 5.5"><path d="M1,1 L4.3,4.3" stroke="#4a4a4a" stroke-width="1.6" fill="none"/><path d="M5.5,1.375 L5.5,5.5 L1.375,5.5 Z" fill="#4a4a4a"/></svg><div class="t" style="left:659.80px;top:681.87px;font-size:9.6px;line-height:9.6px;font-weight:bold;color:#4a4a4a;">15%</div><div class="abs" style="left:511px;top:705.7px;width:11px;height:10.5px;background:#7a2ee0;border-radius:2px"></div><div class="t" style="left:525.00px;top:705.02px;font-size:11.2px;line-height:11.2px;font-weight:normal;color:#616161;">Shop</div><div class="t" style="right:1272.20px;top:705.02px;font-size:11.2px;line-height:11.2px;font-weight:normal;color:#616161;">$1.3T</div><svg class="abs" style="left:651px;top:708.5px" width="5.5" height="5.5" viewBox="0 0 5.5 5.5"><path d="M1,4.5 L4.3,1.2" stroke="#1b7f4d" stroke-width="1.6" fill="none"/><path d="M1.375,0 L5.5,0 L5.5,4.125 Z" fill="#1b7f4d"/></svg><div class="t" style="left:658.90px;top:706.97px;font-size:9.6px;line-height:9.6px;font-weight:bold;color:#1b7f4d;">338%</div><div class="abs" style="left:511px;top:730.5px;width:11px;height:10.5px;background:#6d7fe8;border-radius:2px"></div><div class="t" style="left:525.00px;top:729.82px;font-size:11.2px;line-height:11.2px;font-weight:normal;color:#616161;">Draft Orders</div><div class="t" style="right:1272.20px;top:729.82px;font-size:11.2px;line-height:11.2px;font-weight:normal;color:#616161;">$724</div><svg class="abs" style="left:651px;top:733.3px" width="5.5" height="5.5" viewBox="0 0 5.5 5.5"><path d="M1,4.5 L4.3,1.2" stroke="#1b7f4d" stroke-width="1.6" fill="none"/><path d="M1.375,0 L5.5,0 L5.5,4.125 Z" fill="#1b7f4d"/></svg><div class="t" style="left:659.80px;top:731.77px;font-size:9.6px;line-height:9.6px;font-weight:bold;color:#1b7f4d;">86%</div><div class="t" style="left:804.80px;top:601.18px;font-size:11.6px;line-height:11.6px;font-weight:normal;color:#303030;letter-spacing:0.469px;margin-right:-0.469px;-webkit-text-stroke:0.4px #303030">Average order value over time</div><div class="abs" style="left:804.8px;top:613.25px;width:168.3px;height:1px;background-image:linear-gradient(90deg,#b5b5b5 1px,transparent 1px);background-size:2.5px 1px"></div><div class="t" style="left:804.80px;top:624.62px;font-size:19px;line-height:19px;font-weight:normal;color:#303030;letter-spacing:0.057px;margin-right:-0.057px;-webkit-text-stroke:0.45px #303030">$90.78</div><svg class="abs" style="left:870.5px;top:632.1px" width="6" height="6" viewBox="0 0 6 6"><path d="M1,5 L4.8,1.2" stroke="#1b7f4d" stroke-width="1.6" fill="none"/><path d="M1.5,0 L6,0 L6,4.5 Z" fill="#1b7f4d"/></svg><div class="t" style="left:879.00px;top:630.13px;font-size:10px;line-height:10px;font-weight:bold;color:#1b7f4d;">5%</div><div class="t" style="left:806.90px;top:659.43px;font-size:10px;line-height:10px;font-weight:normal;color:#616161;">$200</div><div class="t" style="left:806.90px;top:730.33px;font-size:10px;line-height:10px;font-weight:normal;color:#616161;">$0</div><div class="t" style="left:851.50px;top:747.61px;font-size:10.5px;line-height:10.5px;font-weight:normal;color:#616161;transform:translateX(-50%);">May 2024</div><div class="t" style="left:929.10px;top:747.61px;font-size:10.5px;line-height:10.5px;font-weight:normal;color:#616161;transform:translateX(-50%);">Jul 2024</div><div class="t" style="left:1006.70px;top:747.61px;font-size:10.5px;line-height:10.5px;font-weight:normal;color:#616161;transform:translateX(-50%);">Sept 2024</div><div class="t" style="left:1084.30px;top:747.61px;font-size:10.5px;line-height:10.5px;font-weight:normal;color:#616161;transform:translateX(-50%);">Nov 2024</div><div class="t" style="left:1161.90px;top:747.61px;font-size:10.5px;line-height:10.5px;font-weight:normal;color:#616161;transform:translateX(-50%);">Jan 2025</div><div class="t" style="left:1239.50px;top:747.61px;font-size:10.5px;line-height:10.5px;font-weight:normal;color:#616161;transform:translateX(-50%);">Mar 2025</div><svg class="abs" style="left:0;top:0" width="1919" height="945" viewBox="0 0 1919 945"><defs><linearGradient id="g2" x1="0" y1="0" x2="0" y2="1"><stop offset="0" stop-color="#3aa0d0" stop-opacity="0.06"/><stop offset="1" stop-color="#3aa0d0" stop-opacity="0"/></linearGradient></defs><path d="M852,664 L1317.5,664" stroke="#ebebeb" stroke-width="1"/><path d="M852,735 L1317.5,735" stroke="#ebebeb" stroke-width="1"/><path d="M852.0,702.5 C854.0,702.8 858.0,703.3 863.8,704.3 C869.6,705.3 880.7,708.1 887.0,708.4 C893.3,708.7 897.3,707.6 901.7,706.3 C906.1,705.0 909.0,702.0 913.4,700.5 C917.8,699.0 923.1,697.9 928.0,697.6 C932.9,697.4 937.3,697.8 942.6,699.0 C947.9,700.2 954.6,703.8 960.0,704.9 C965.4,706.0 968.9,705.8 974.7,705.4 C980.5,705.0 985.3,703.2 995.0,702.5 C1004.7,701.8 1021.8,701.7 1033.0,701.4 C1044.2,701.1 1053.2,700.9 1062.0,700.5 C1070.8,700.1 1079.7,699.0 1085.6,699.0 C1091.5,699.0 1092.8,699.0 1097.2,700.5 C1101.6,702.0 1106.5,706.5 1111.8,707.8 C1117.1,709.1 1120.5,708.8 1129.3,708.4 C1138.0,708.0 1154.1,706.7 1164.3,705.4 C1174.5,704.1 1183.3,701.3 1190.6,700.5 C1197.9,699.7 1201.2,700.4 1208.0,700.5 C1214.8,700.6 1221.3,701.6 1231.5,701.4 C1241.7,701.1 1258.2,699.2 1269.4,699.0 C1280.6,698.8 1290.6,699.6 1298.6,699.9 C1306.6,700.2 1314.3,700.8 1317.5,701.0 L1317.5,735 L852,735 Z" fill="url(#g2)"/><path d="M852.0,706.3 C855.4,705.6 866.7,703.0 872.5,702.0 C878.3,701.0 881.1,700.7 887.0,700.5 C892.9,700.3 900.3,700.8 907.6,701.0 C914.9,701.2 924.1,701.5 930.9,702.0 C937.7,702.5 938.7,703.8 948.4,704.3 C958.1,704.8 977.6,705.0 989.3,704.9 C1001.0,704.8 1006.7,703.9 1018.4,703.4 C1030.1,702.9 1050.5,701.5 1059.3,702.0 C1068.1,702.5 1066.1,705.3 1071.0,706.3 C1075.9,707.3 1082.7,708.0 1088.5,707.8 C1094.3,707.6 1098.2,705.5 1106.0,704.9 C1113.8,704.3 1123.0,704.5 1135.2,704.3 C1147.4,704.0 1168.8,704.3 1179.0,703.4 C1189.2,702.5 1191.1,699.6 1196.4,699.0 C1201.7,698.4 1205.2,698.7 1211.0,699.9 C1216.8,701.1 1222.2,705.5 1231.5,706.3 C1240.8,707.1 1255.8,705.0 1266.5,704.9 C1277.2,704.8 1287.2,705.1 1295.7,705.7 C1304.2,706.3 1313.9,708.0 1317.5,708.4" stroke="#9db3c0" stroke-width="1.8" fill="none" stroke-dasharray="0.1 3.5" stroke-linecap="round"/><path d="M852.0,702.5 C854.0,702.8 858.0,703.3 863.8,704.3 C869.6,705.3 880.7,708.1 887.0,708.4 C893.3,708.7 897.3,707.6 901.7,706.3 C906.1,705.0 909.0,702.0 913.4,700.5 C917.8,699.0 923.1,697.9 928.0,697.6 C932.9,697.4 937.3,697.8 942.6,699.0 C947.9,700.2 954.6,703.8 960.0,704.9 C965.4,706.0 968.9,705.8 974.7,705.4 C980.5,705.0 985.3,703.2 995.0,702.5 C1004.7,701.8 1021.8,701.7 1033.0,701.4 C1044.2,701.1 1053.2,700.9 1062.0,700.5 C1070.8,700.1 1079.7,699.0 1085.6,699.0 C1091.5,699.0 1092.8,699.0 1097.2,700.5 C1101.6,702.0 1106.5,706.5 1111.8,707.8 C1117.1,709.1 1120.5,708.8 1129.3,708.4 C1138.0,708.0 1154.1,706.7 1164.3,705.4 C1174.5,704.1 1183.3,701.3 1190.6,700.5 C1197.9,699.7 1201.2,700.4 1208.0,700.5 C1214.8,700.6 1221.3,701.6 1231.5,701.4 C1241.7,701.1 1258.2,699.2 1269.4,699.0 C1280.6,698.8 1290.6,699.6 1298.6,699.9 C1306.6,700.2 1314.3,700.8 1317.5,701.0" stroke="#3f8fbb" stroke-width="1.7" fill="none"/><path d="M912.5,787.4 L922.5,787.4" stroke="#3f8fbb" stroke-width="2" stroke-linecap="round"/><path d="M1067,787.4 L1077.7,787.4" stroke="#8cc3dc" stroke-width="1.6" stroke-dasharray="0.1 3.2" stroke-linecap="round"/></svg><div class="t" style="left:928.60px;top:783.51px;font-size:10.5px;line-height:10.5px;font-weight:normal;color:#616161;letter-spacing:-0.208px;margin-right:0.208px;">12 May 2024–11 May 2025</div><div class="t" style="left:1084.00px;top:783.51px;font-size:10.5px;line-height:10.5px;font-weight:normal;color:#616161;letter-spacing:-0.212px;margin-right:0.212px;">13 May 2023–11 May 2024</div><div class="t" style="left:1364.80px;top:601.18px;font-size:11.6px;line-height:11.6px;font-weight:normal;color:#303030;letter-spacing:0.562px;margin-right:-0.562px;-webkit-text-stroke:0.4px #303030">Total sales by product</div><div class="abs" style="left:1364.8px;top:613.25px;width:124px;height:1px;background-image:linear-gradient(90deg,#b5b5b5 1px,transparent 1px);background-size:2.5px 1px"></div><div class="t" style="left:1364.80px;top:626.60px;font-size:10.4px;line-height:10.4px;font-weight:normal;color:#616161;letter-spacing:-0.009px;margin-right:0.009px;">Chatoyant Mineral Wash Plus Pants - More Colors · Chatoyant · Pants</div><div class="abs" style="left:1364.8px;top:641.5px;width:406.2px;height:29.8px;background:#38a6e8;border-radius:0 3px 3px 0"></div><div class="abs" style="left:1364.8px;top:673.6px;width:385.2px;height:29.8px;background:#94c8e8;border-radius:0 3px 3px 0"></div><div class="t" style="left:1780.40px;top:652.03px;font-size:10.6px;line-height:10.6px;font-weight:normal;color:#616161;letter-spacing:0.043px;margin-right:-0.043px;">$6,878.40</div><svg class="abs" style="left:1838px;top:654.5px" width="6" height="6" viewBox="0 0 6 6"><path d="M1,5 L4.8,1.2" stroke="#1b7f4d" stroke-width="1.6" fill="none"/><path d="M1.5,0 L6,0 L6,4.5 Z" fill="#1b7f4d"/></svg><div class="t" style="left:1847.50px;top:652.20px;font-size:10.4px;line-height:10.4px;font-weight:bold;color:#1b7f4d;">5%</div><div class="t" style="left:1759.40px;top:682.73px;font-size:10.6px;line-height:10.6px;font-weight:normal;color:#616161;letter-spacing:0.055px;margin-right:-0.055px;">$6,520.25</div><div class="t" style="left:1364.80px;top:721.70px;font-size:10.4px;line-height:10.4px;font-weight:normal;color:#616161;letter-spacing:0.007px;margin-right:-0.007px;">Chatoyant Foldover Waist Bootcut Yoga Pants · Chatoyant · pants</div><div class="abs" style="left:1364.8px;top:736px;width:329.8px;height:29.8px;background:#38a6e8;border-radius:0 3px 3px 0"></div><div class="abs" style="left:1364.8px;top:768px;width:222.4px;height:29.8px;background:#94c8e8;border-radius:0 3px 3px 0"></div><div class="t" style="left:1703.90px;top:746.33px;font-size:10.6px;line-height:10.6px;font-weight:normal;color:#616161;letter-spacing:-0.057px;margin-right:0.057px;">$5,587.55</div><svg class="abs" style="left:1760.8px;top:748.8px" width="6" height="6" viewBox="0 0 6 6"><path d="M1,5 L4.8,1.2" stroke="#1b7f4d" stroke-width="1.6" fill="none"/><path d="M1.5,0 L6,0 L6,4.5 Z" fill="#1b7f4d"/></svg><div class="t" style="left:1770.00px;top:746.50px;font-size:10.4px;line-height:10.4px;font-weight:bold;color:#1b7f4d;">48%</div><div class="t" style="left:1596.50px;top:778.43px;font-size:10.6px;line-height:10.6px;font-weight:normal;color:#616161;letter-spacing:-0.020px;margin-right:0.020px;">$3,766.80</div><div class="t" style="left:244.80px;top:844.38px;font-size:11.6px;line-height:11.6px;font-weight:normal;color:#303030;letter-spacing:0.500px;margin-right:-0.500px;-webkit-text-stroke:0.4px #303030">Sessions over time</div><div class="abs" style="left:244.8px;top:856.45px;width:106.5px;height:1px;background-image:linear-gradient(90deg,#b5b5b5 1px,transparent 1px);background-size:2.5px 1px"></div><div class="t" style="left:244.80px;top:867.52px;font-size:19px;line-height:19px;font-weight:normal;color:#303030;letter-spacing:-1.508px;margin-right:1.508px;-webkit-text-stroke:0.45px #303030">1,17,250</div><svg class="abs" style="left:316px;top:874.2px" width="6" height="6" viewBox="0 0 6 6"><path d="M1,5 L4.8,1.2" stroke="#1b7f4d" stroke-width="1.6" fill="none"/><path d="M1.5,0 L6,0 L6,4.5 Z" fill="#1b7f4d"/></svg><div class="t" style="left:325.00px;top:872.24px;font-size:10px;line-height:10px;font-weight:bold;color:#1b7f4d;">12%</div><div class="t" style="left:246.90px;top:902.33px;font-size:10px;line-height:10px;font-weight:normal;color:#616161;">15T</div><div class="t" style="left:804.80px;top:844.38px;font-size:11.6px;line-height:11.6px;font-weight:normal;color:#303030;letter-spacing:0.512px;margin-right:-0.512px;-webkit-text-stroke:0.4px #303030">Conversion rate over time</div><div class="abs" style="left:804.8px;top:856.45px;width:145.1px;height:1px;background-image:linear-gradient(90deg,#b5b5b5 1px,transparent 1px);background-size:2.5px 1px"></div><div class="t" style="left:804.80px;top:867.52px;font-size:19px;line-height:19px;font-weight:normal;color:#303030;letter-spacing:0.182px;margin-right:-0.182px;-webkit-text-stroke:0.45px #303030">0.89%</div><svg class="abs" style="left:867.3px;top:874.2px" width="6" height="6" viewBox="0 0 6 6"><path d="M1,1 L4.8,4.8" stroke="#616161" stroke-width="1.6" fill="none"/><path d="M6,1.5 L6,6 L1.5,6 Z" fill="#616161"/></svg><div class="t" style="left:875.50px;top:872.24px;font-size:10px;line-height:10px;font-weight:bold;color:#616161;">26%</div><div class="t" style="left:806.90px;top:902.33px;font-size:10px;line-height:10px;font-weight:normal;color:#616161;">2%</div><div class="t" style="left:806.90px;top:940.03px;font-size:10px;line-height:10px;font-weight:normal;color:#616161;">1.5%</div><div class="t" style="left:1364.40px;top:844.48px;font-size:11.6px;line-height:11.6px;font-weight:normal;color:#303030;letter-spacing:0.573px;margin-right:-0.573px;-webkit-text-stroke:0.4px #303030">Conversion rate breakdown</div><div class="abs" style="left:1364.4px;top:856.55px;width:155.6px;height:1px;background:#dcdcdc"></div><div class="t" style="left:1364.40px;top:867.72px;font-size:19px;line-height:19px;font-weight:normal;color:#303030;letter-spacing:0.007px;margin-right:-0.007px;-webkit-text-stroke:0.45px #303030">0.89%</div><svg class="abs" style="left:1427.3px;top:874.3px" width="6" height="6" viewBox="0 0 6 6"><path d="M1,1 L4.8,4.8" stroke="#616161" stroke-width="1.6" fill="none"/><path d="M6,1.5 L6,6 L1.5,6 Z" fill="#616161"/></svg><div class="t" style="left:1435.60px;top:872.33px;font-size:10px;line-height:10px;font-weight:bold;color:#616161;">26%</div><svg class="abs" style="left:0;top:0" width="1919" height="945" viewBox="0 0 1919 945"><defs><linearGradient id="g3" x1="0" y1="0" x2="0" y2="1"><stop offset="0" stop-color="#3aa0d0" stop-opacity="0.10"/><stop offset="1" stop-color="#3aa0d0" stop-opacity="0.03"/></linearGradient></defs><path d="M285.7,906.9 L757.5,906.9" stroke="#ebebeb" stroke-width="1"/><path d="M853.6,906.9 L1317.5,906.9" stroke="#ebebeb" stroke-width="1"/><path d="M660.6,945.0 C661.3,941.8 663.3,930.8 665.0,926.0 C666.7,921.2 668.9,918.2 671.0,916.0 C673.1,913.8 674.3,913.6 677.5,913.0 C680.7,912.4 685.8,912.8 690.0,912.5 C694.2,912.2 697.8,911.4 702.5,911.0 C707.2,910.6 714.4,910.0 718.0,910.3 C721.6,910.5 722.5,910.9 724.4,912.5 C726.3,914.1 727.8,916.7 729.4,920.0 C731.0,923.3 732.6,928.3 733.8,932.5 C734.9,936.7 735.6,942.9 736.0,945.0 Z" fill="url(#g3)"/><path d="M660.6,945.0 C661.3,941.8 663.3,930.8 665.0,926.0 C666.7,921.2 668.9,918.2 671.0,916.0 C673.1,913.8 674.3,913.6 677.5,913.0 C680.7,912.4 685.8,912.8 690.0,912.5 C694.2,912.2 697.8,911.4 702.5,911.0 C707.2,910.6 714.4,910.0 718.0,910.3 C721.6,910.5 722.5,910.9 724.4,912.5 C726.3,914.1 727.8,916.7 729.4,920.0 C731.0,923.3 732.6,928.3 733.8,932.5 C734.9,936.7 735.6,942.9 736.0,945.0" stroke="#3f8fbb" stroke-width="1.7" fill="none"/><path d="M672,943 L690,943" stroke="#8cc3dc" stroke-width="1.4" stroke-dasharray="0.1 3.2" stroke-linecap="round"/><path d="M1066.0,945.0 C1067.8,943.0 1072.6,935.3 1076.8,933.0 C1081.0,930.7 1086.5,930.7 1091.4,931.0 C1096.3,931.3 1101.1,933.5 1106.0,935.0 C1110.9,936.5 1115.8,939.0 1120.6,940.0 C1125.4,941.0 1132.6,940.8 1135.0,941.0" stroke="#9db3c0" stroke-width="1.8" fill="none" stroke-dasharray="0.1 3.5" stroke-linecap="round"/><path d="M1500.5,901.7 L1500.5,945" stroke="#e3e3e3" stroke-width="1"/><path d="M1637.6,901.7 L1637.6,945" stroke="#e3e3e3" stroke-width="1"/><path d="M1774.3,901.7 L1774.3,945" stroke="#e3e3e3" stroke-width="1"/></svg><div class="abs" style="left:1365px;top:910px;width:13px;height:13px;background:#f1f1f1;border-radius:50%"></div><svg class="abs" style="left:1365px;top:910px" width="13" height="13" viewBox="0 0 13 13"><path d="M4,5.6 L9.4,4.2 M4,8.8 L9.4,7.4 M7.6,2.4 L5.6,10.8" stroke="#303030" stroke-width="1.2" stroke-linecap="round"/></svg><div class="t" style="left:1382.40px;top:909.69px;font-size:11px;line-height:11px;font-weight:normal;color:#303030;letter-spacing:0.124px;margin-right:-0.124px;">Sessions</div><div class="t" style="left:1364.40px;top:928.04px;font-size:12px;line-height:12px;font-weight:bold;color:#303030;letter-spacing:1.236px;margin-right:-1.236px;">100%</div><div class="t" style="left:1403.90px;top:928.04px;font-size:12px;line-height:12px;font-weight:normal;color:#616161;letter-spacing:-0.773px;margin-right:0.773px;">1,17,250</div><div class="t" style="left:1511.00px;top:909.69px;font-size:11px;line-height:11px;font-weight:normal;color:#303030;letter-spacing:0.331px;margin-right:-0.331px;">Added to cart</div><div class="t" style="left:1511.00px;top:928.04px;font-size:12px;line-height:12px;font-weight:bold;color:#303030;letter-spacing:0.319px;margin-right:-0.319px;">3.15%</div><div class="t" style="left:1553.80px;top:928.04px;font-size:12px;line-height:12px;font-weight:normal;color:#616161;letter-spacing:0.268px;margin-right:-0.268px;">3,688</div><div class="t" style="left:1648.00px;top:909.69px;font-size:11px;line-height:11px;font-weight:normal;color:#303030;letter-spacing:0.213px;margin-right:-0.213px;">Reached checkout</div><div class="t" style="left:1648.00px;top:928.04px;font-size:12px;line-height:12px;font-weight:bold;color:#303030;letter-spacing:0.744px;margin-right:-0.744px;">1.96%</div><div class="t" style="left:1691.40px;top:928.04px;font-size:12px;line-height:12px;font-weight:normal;color:#616161;letter-spacing:0.343px;margin-right:-0.343px;">2,300</div><div class="t" style="left:1784.70px;top:909.69px;font-size:11px;line-height:11px;font-weight:normal;color:#303030;letter-spacing:0.243px;margin-right:-0.243px;">Completed che...</div><div class="t" style="left:1784.70px;top:928.04px;font-size:12px;line-height:12px;font-weight:bold;color:#303030;letter-spacing:1.444px;margin-right:-1.444px;">0.89%</div><div class="t" style="left:1830.20px;top:928.04px;font-size:12px;line-height:12px;font-weight:normal;color:#616161;letter-spacing:-0.707px;margin-right:0.707px;">1,041</div><svg class="abs" style="left:0;top:0" width="1919" height="945" viewBox="0 0 1919 945"><defs><linearGradient id="gs" x1="0" y1="0" x2="0" y2="1"><stop offset="0" stop-color="#3aa0d0" stop-opacity="0.18"/><stop offset="1" stop-color="#3aa0d0" stop-opacity="0.02"/></linearGradient></defs><path d="M551.0,186.8 C552.1,185.9 555.1,182.2 557.7,181.3 C560.3,180.4 563.5,180.9 566.4,181.3 C569.3,181.8 572.8,184.7 575.2,184.0 C577.6,183.3 578.5,177.6 580.7,177.0 C582.9,176.4 585.9,179.3 588.3,180.2 C590.7,181.1 592.7,181.2 594.9,182.4 C597.1,183.6 599.4,187.8 601.4,187.4 C603.4,187.0 605.0,181.3 607.0,180.2 C609.0,179.1 611.2,179.0 613.5,180.9 C615.8,182.8 619.5,190.0 620.7,191.8 L620.7,192 L551,192 Z" fill="url(#gs)"/><path d="M588.0,178.5 C589.3,178.7 593.5,179.7 596.0,179.5 C598.5,179.3 600.7,177.7 603.0,177.5 C605.3,177.3 608.8,178.3 610.0,178.5" stroke="#8cc3dc" stroke-width="1.2" fill="none" stroke-dasharray="0.1 3" stroke-linecap="round"/><path d="M551.0,186.8 C552.1,185.9 555.1,182.2 557.7,181.3 C560.3,180.4 563.5,180.9 566.4,181.3 C569.3,181.8 572.8,184.7 575.2,184.0 C577.6,183.3 578.5,177.6 580.7,177.0 C582.9,176.4 585.9,179.3 588.3,180.2 C590.7,181.1 592.7,181.2 594.9,182.4 C597.1,183.6 599.4,187.8 601.4,187.4 C603.4,187.0 605.0,181.3 607.0,180.2 C609.0,179.1 611.2,179.0 613.5,180.9 C615.8,182.8 619.5,190.0 620.7,191.8" stroke="#3f8fbb" stroke-width="1.15" fill="none"/><path d="M971.9,181.6 C973.1,181.0 977.4,177.8 979.4,178.2 C981.4,178.6 982.3,184.1 984.0,183.9 C985.7,183.7 987.5,177.4 989.8,177.0 C992.1,176.6 994.9,181.2 997.8,181.6 C1000.7,182.0 1004.0,179.4 1007.0,179.3 C1010.0,179.2 1013.3,181.2 1016.0,180.9 C1018.7,180.6 1020.7,178.0 1023.0,177.7 C1025.3,177.4 1028.0,179.5 1029.9,179.3 C1031.8,179.1 1032.7,176.1 1034.5,176.6 C1036.3,177.1 1039.8,181.4 1040.9,182.3 L1040.9,192 L971.9,192 Z" fill="url(#gs)"/><path d="M985.0,186.0 C986.7,186.3 991.7,188.0 995.0,188.0 C998.3,188.0 1001.7,185.8 1005.0,186.0 C1008.3,186.2 1011.7,189.0 1015.0,189.0 C1018.3,189.0 1023.3,186.5 1025.0,186.0" stroke="#8cc3dc" stroke-width="1.2" fill="none" stroke-dasharray="0.1 3" stroke-linecap="round"/><path d="M971.9,181.6 C973.1,181.0 977.4,177.8 979.4,178.2 C981.4,178.6 982.3,184.1 984.0,183.9 C985.7,183.7 987.5,177.4 989.8,177.0 C992.1,176.6 994.9,181.2 997.8,181.6 C1000.7,182.0 1004.0,179.4 1007.0,179.3 C1010.0,179.2 1013.3,181.2 1016.0,180.9 C1018.7,180.6 1020.7,178.0 1023.0,177.7 C1025.3,177.4 1028.0,179.5 1029.9,179.3 C1031.8,179.1 1032.7,176.1 1034.5,176.6 C1036.3,177.1 1039.8,181.4 1040.9,182.3" stroke="#3f8fbb" stroke-width="1.15" fill="none"/><path d="M1391.0,186.2 C1392.0,185.2 1394.7,181.0 1397.2,180.5 C1399.8,180.0 1403.2,182.4 1406.3,183.2 C1409.3,184.0 1413.0,186.2 1415.5,185.5 C1418.0,184.8 1418.5,180.0 1421.2,179.3 C1423.9,178.7 1428.7,180.8 1431.6,181.6 C1434.5,182.4 1436.5,182.8 1438.4,183.9 C1440.3,185.1 1441.1,188.9 1443.0,188.5 C1444.9,188.1 1447.9,182.5 1450.0,181.6 C1452.1,180.7 1454.0,181.7 1455.7,183.2 C1457.4,184.7 1459.5,189.5 1460.2,190.8 L1460.2,192 L1391,192 Z" fill="url(#gs)"/><path d="M1400.0,182.0 C1401.7,181.8 1405.0,181.7 1410.0,181.0 C1415.0,180.3 1425.0,178.3 1430.0,178.0 C1435.0,177.7 1436.7,179.0 1440.0,179.0 C1443.3,179.0 1447.2,178.2 1450.0,178.0 C1452.8,177.8 1455.8,178.0 1457.0,178.0" stroke="#8cc3dc" stroke-width="1.2" fill="none" stroke-dasharray="0.1 3" stroke-linecap="round"/><path d="M1391.0,186.2 C1392.0,185.2 1394.7,181.0 1397.2,180.5 C1399.8,180.0 1403.2,182.4 1406.3,183.2 C1409.3,184.0 1413.0,186.2 1415.5,185.5 C1418.0,184.8 1418.5,180.0 1421.2,179.3 C1423.9,178.7 1428.7,180.8 1431.6,181.6 C1434.5,182.4 1436.5,182.8 1438.4,183.9 C1440.3,185.1 1441.1,188.9 1443.0,188.5 C1444.9,188.1 1447.9,182.5 1450.0,181.6 C1452.1,180.7 1454.0,181.7 1455.7,183.2 C1457.4,184.7 1459.5,189.5 1460.2,190.8" stroke="#3f8fbb" stroke-width="1.15" fill="none"/><path d="M1811.0,186.2 C1812.0,185.2 1814.7,181.0 1817.2,180.5 C1819.8,180.0 1823.2,182.4 1826.3,183.2 C1829.3,184.0 1833.0,186.2 1835.5,185.5 C1838.0,184.8 1838.5,180.0 1841.2,179.3 C1843.9,178.7 1848.7,180.8 1851.6,181.6 C1854.5,182.4 1856.5,182.8 1858.4,183.9 C1860.3,185.1 1861.1,188.9 1863.0,188.5 C1864.9,188.1 1867.9,182.5 1870.0,181.6 C1872.1,180.7 1874.0,181.7 1875.7,183.2 C1877.4,184.7 1879.5,189.5 1880.2,190.8 L1880.2,192 L1811,192 Z" fill="url(#gs)"/><path d="M1820.0,182.0 C1821.7,181.8 1825.0,181.7 1830.0,181.0 C1835.0,180.3 1845.0,178.3 1850.0,178.0 C1855.0,177.7 1856.7,179.0 1860.0,179.0 C1863.3,179.0 1867.2,178.2 1870.0,178.0 C1872.8,177.8 1875.8,178.0 1877.0,178.0" stroke="#8cc3dc" stroke-width="1.2" fill="none" stroke-dasharray="0.1 3" stroke-linecap="round"/><path d="M1811.0,186.2 C1812.0,185.2 1814.7,181.0 1817.2,180.5 C1819.8,180.0 1823.2,182.4 1826.3,183.2 C1829.3,184.0 1833.0,186.2 1835.5,185.5 C1838.0,184.8 1838.5,180.0 1841.2,179.3 C1843.9,178.7 1848.7,180.8 1851.6,181.6 C1854.5,182.4 1856.5,182.8 1858.4,183.9 C1860.3,185.1 1861.1,188.9 1863.0,188.5 C1864.9,188.1 1867.9,182.5 1870.0,181.6 C1872.1,180.7 1874.0,181.7 1875.7,183.2 C1877.4,184.7 1879.5,189.5 1880.2,190.8" stroke="#3f8fbb" stroke-width="1.15" fill="none"/></svg><div class="abs" style="left:1910px;top:48px;width:9px;height:897px;background:#f1f1f1;border-radius:0 8px 0 0"></div><div class="abs" style="left:1912px;top:60px;width:6px;height:282px;background:#b0b0b0;border-radius:3px"></div><svg class="abs" style="left:1911px;top:50px" width="8" height="6" viewBox="0 0 8 6"><path d="M4,1 L7,5 L1,5 Z" fill="#a3a3a3"/></svg><svg class="abs" style="left:1911px;top:937px" width="8" height="6" viewBox="0 0 8 6"><path d="M1,1 L7,1 L4,5 Z" fill="#a3a3a3"/></svg><div class="abs" style="left:0;top:943px;width:1919px;height:1px;background:#a9abb0"></div><div class="abs" style="left:0;top:944px;width:1919px;height:1px;background:#dfe3ea"></div>
</body></html>
